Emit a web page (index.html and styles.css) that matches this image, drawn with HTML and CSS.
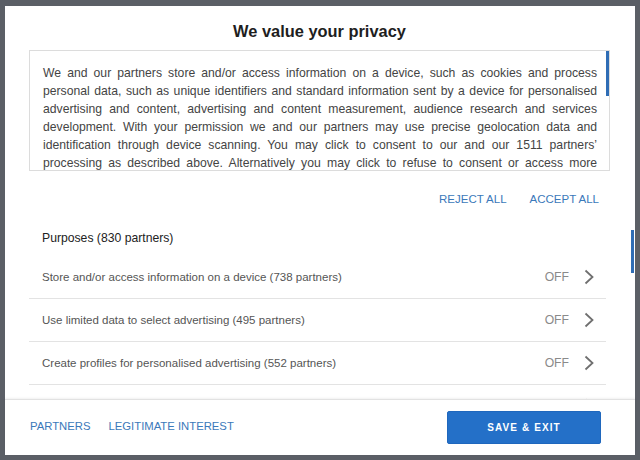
FILE: index.html
```html
<!DOCTYPE html>
<html lang="en">
<head>
<meta charset="utf-8">
<title>We value your privacy</title>
<link rel="stylesheet" href="styles.css">
</head>
<body>
<div class="modal">
  <div class="content">
    <h1 class="title">We value your privacy</h1>
    <div class="textbox">
      <p class="intro">We and our partners store and/or access information on a device, such as cookies and process personal data, such as unique identifiers and standard information sent by a device for personalised advertising and content, advertising and content measurement, audience research and services development. With your permission we and our partners may use precise geolocation data and identification through device scanning. You may click to consent to our and our 1511 partners’ processing as described above. Alternatively you may click to refuse to consent or access more detailed information and change your preferences before consenting.</p>
      <span class="box-thumb"></span>
    </div>
    <div class="actions">
      <button class="link-btn">REJECT ALL</button>
      <button class="link-btn">ACCEPT ALL</button>
    </div>
    <div class="section-title">Purposes (830 partners)</div>
    <ul class="purposes">
      <li class="row"><span class="row-label">Store and/or access information on a device (738 partners)</span><span class="state">OFF</span><svg class="chev" viewBox="0 0 10 16" width="10" height="16"><path d="M1.5 1.5 L8.5 8 L1.5 14.5" fill="none" stroke="#6f6f6f" stroke-width="1.8"/></svg></li>
      <li class="row"><span class="row-label">Use limited data to select advertising (495 partners)</span><span class="state">OFF</span><svg class="chev" viewBox="0 0 10 16" width="10" height="16"><path d="M1.5 1.5 L8.5 8 L1.5 14.5" fill="none" stroke="#6f6f6f" stroke-width="1.8"/></svg></li>
      <li class="row"><span class="row-label">Create profiles for personalised advertising (552 partners)</span><span class="state">OFF</span><svg class="chev" viewBox="0 0 10 16" width="10" height="16"><path d="M1.5 1.5 L8.5 8 L1.5 14.5" fill="none" stroke="#6f6f6f" stroke-width="1.8"/></svg></li>
      <li class="row"><span class="row-label">Use profiles to select personalised advertising (541 partners)</span><span class="state">OFF</span><svg class="chev" viewBox="0 0 10 16" width="10" height="16"><path d="M1.5 1.5 L8.5 8 L1.5 14.5" fill="none" stroke="#6f6f6f" stroke-width="1.8"/></svg></li>
    </ul>
  </div>
  <span class="modal-thumb"></span>
  <div class="footer">
    <div class="footer-links">
      <button class="link-btn">PARTNERS</button>
      <button class="link-btn">LEGITIMATE INTEREST</button>
    </div>
    <button class="save-btn">SAVE &amp; EXIT</button>
  </div>
</div>
</body>
</html>
```
FILE: styles.css
```css
* { box-sizing: border-box; }
html, body {
  margin: 0;
  padding: 0;
  height: 460px;
  overflow: hidden;
}
body {
  background: #5b5f66;
  font-family: "Liberation Sans", Arial, sans-serif;
  color: #444;
}
.modal {
  position: relative;
  margin: 6px 0 0 5px;
  width: 630px;
  height: 449px;
  background: #fff;
  display: flex;
  flex-direction: column;
}
.content {
  flex: 1;
  overflow: hidden;
  padding: 13px 25px 0 24px;
}
.title {
  margin: 0 0 7px;
  font-size: 16.4px;
  line-height: 24px;
  font-weight: bold;
  color: #1e1e1e;
  text-align: center;
}
.textbox {
  position: relative;
  height: 121px;
  border: 1px solid #dcdcdc;
  padding: 13px 12px 0 13px;
  overflow: hidden;
}
.intro {
  margin: 0;
  font-size: 12.2px;
  line-height: 18px;
  text-align: justify;
  color: #444;
}
.box-thumb {
  position: absolute;
  top: -1px;
  right: 0;
  width: 3px;
  height: 46px;
  background: #2f6db5;
}
.actions {
  display: flex;
  justify-content: flex-end;
  margin-top: 12px;
  height: 32px;
}
.link-btn {
  background: none;
  border: 0;
  padding: 0 12px;
  font-family: "Liberation Sans", Arial, sans-serif;
  font-size: 11.5px;
  line-height: 32px;
  color: #3b79ba;
  cursor: pointer;
}
.actions .link-btn { padding: 0 11px 0 12px; }
.section-title {
  padding: 14px 0 9px 13px;
  font-size: 12.2px;
  line-height: 18px;
  color: #222;
}
.purposes {
  list-style: none;
  margin: 0 4px 0 0;
  padding: 0;
}
.row {
  display: flex;
  align-items: center;
  height: 43px;
  padding: 0 12px 0 13px;
  border-bottom: 1px solid #e3e3e3;
  font-size: 11.5px;
  color: #555;
}
.row-label { flex: 1; }
.state {
  font-size: 12.2px;
  color: #8a8a8a;
  margin-right: 15px;
}
.chev { display: block; }
.modal-thumb {
  position: absolute;
  top: 224px;
  right: 1px;
  width: 3px;
  height: 43px;
  background: #2f6db5;
}
.footer {
  height: 56px;
  flex: none;
  border-top: 1px solid #e2e2e2;
  box-shadow: 0 -1px 2px rgba(0,0,0,0.06);
  display: flex;
  align-items: center;
  justify-content: space-between;
  padding: 0 34px 0 13px;
  background: #fff;
  position: relative;
}
.footer-links {
  display: flex;
  margin-top: -4px;
}
.footer-links .link-btn { font-size: 11.3px; padding: 0 6px 0 12px; }
.save-btn {
  width: 154px;
  height: 33px;
  border: 1px solid #1f67bd;
  border-radius: 2px;
  background: #2470c8;
  color: #fff;
  font-family: "Liberation Sans", Arial, sans-serif;
  font-size: 10px;
  font-weight: bold;
  letter-spacing: 1.1px;
  cursor: pointer;
}
```
